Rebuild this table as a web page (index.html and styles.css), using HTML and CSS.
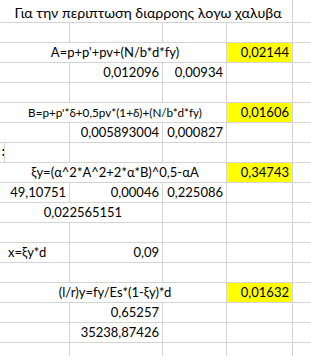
FILE: index.html
```html
<!DOCTYPE html>
<html lang="el">
<head>
<meta charset="utf-8">
<title>Sheet</title>
<link rel="stylesheet" href="styles.css">
</head>
<body>
<div class="sheet">
  <!-- row 1 -->
  <div class="c"></div><div class="c ctr span4 title">Για την περιπτωση διαρροης λογω χαλυβα</div><div class="c"></div>
  <!-- row 2 -->
  <div class="c"></div><div class="c"></div><div class="c"></div><div class="c"></div><div class="c"></div><div class="c"></div>
  <!-- row 3 -->
  <div class="c"></div><div class="c ctr span3">A=p+p'+pv+(N/b*d*fy)</div><div class="c num hl">0,02144</div><div class="c"></div>
  <!-- row 4 -->
  <div class="c"></div><div class="c"></div><div class="c num">0,012096</div><div class="c num">0,00934</div><div class="c"></div><div class="c"></div>
  <!-- row 5 -->
  <div class="c"></div><div class="c"></div><div class="c"></div><div class="c"></div><div class="c"></div><div class="c"></div>
  <!-- row 6 -->
  <div class="c"></div><div class="c ctr span3 small">B=p+p'*δ+0,5pv*(1+δ)+(N/b*d*fy)</div><div class="c num hl">0,01606</div><div class="c"></div>
  <!-- row 7 -->
  <div class="c"></div><div class="c"></div><div class="c num">0,005893004</div><div class="c num">0,000827</div><div class="c"></div><div class="c"></div>
  <!-- row 8 -->
  <div class="c clip"><span class="stub">:</span></div><div class="c"></div><div class="c"></div><div class="c"></div><div class="c"></div><div class="c"></div>
  <!-- row 9 -->
  <div class="c"></div><div class="c ctr span3">ξy=(α^2*A^2+2*α*B)^0,5-αA</div><div class="c num hl">0,34743</div><div class="c"></div>
  <!-- row 10 -->
  <div class="c"></div><div class="c num">49,10751</div><div class="c num">0,00046</div><div class="c num">0,225086</div><div class="c"></div><div class="c"></div>
  <!-- row 11 -->
  <div class="c"></div><div class="c ctr span2">0,022565151</div><div class="c"></div><div class="c"></div><div class="c"></div>
  <!-- row 12 -->
  <div class="c"></div><div class="c"></div><div class="c"></div><div class="c"></div><div class="c"></div><div class="c"></div>
  <!-- row 13 -->
  <div class="c"></div><div class="c left">x=ξy*d</div><div class="c num">0,09</div><div class="c"></div><div class="c"></div><div class="c"></div>
  <!-- row 14 -->
  <div class="c"></div><div class="c"></div><div class="c"></div><div class="c"></div><div class="c"></div><div class="c"></div>
  <!-- row 15 -->
  <div class="c"></div><div class="c ctr span3">(l/r)y=fy/Es*(1-ξy)*d</div><div class="c num hl">0,01632</div><div class="c"></div>
  <!-- row 16 -->
  <div class="c"></div><div class="c"></div><div class="c num">0,65257</div><div class="c"></div><div class="c"></div><div class="c"></div>
  <!-- row 17 -->
  <div class="c"></div><div class="c"></div><div class="c num">35238,87426</div><div class="c"></div><div class="c"></div><div class="c"></div>
  <!-- row 18 -->
  <div class="c"></div><div class="c"></div><div class="c"></div><div class="c"></div><div class="c"></div><div class="c"></div>
</div>
</body>
</html>
```
FILE: styles.css
```css
html, body {
  margin: 0;
  padding: 0;
  background: #ffffff;
  overflow: hidden;
}

.sheet {
  display: grid;
  grid-template-columns: 4px 64px 92px 63px 65px 30px;
  grid-template-rows: 22px repeat(17, 19px);
  gap: 1px;
  background: #d4d4d4;
  width: 321px;
  font-family: Lato, "Noto Sans", sans-serif;
  font-size: 13px;
  color: #000;
}

.c {
  background: #ffffff;
  display: flex;
  align-items: flex-end;
  padding: 0 3px 2px 2px;
  line-height: 16px;
  white-space: nowrap;
  overflow: visible;
  min-width: 0;
}

.num { justify-content: flex-end; }
.ctr { justify-content: center; }
.left { padding-left: 3px; }
.hl { background: #ffff00; }
.span4 { grid-column: span 4; }
.span3 { grid-column: span 3; }
.span2 { grid-column: span 2; }
.small { font-size: 11.7px; }
.title { font-size: 14.2px; padding-bottom: 1px; }

.clip {
  overflow: hidden;
  padding: 0;
  justify-content: flex-end;
}

.stub {
  font-weight: 700;
  font-size: 13px;
  margin-right: -1px;
  padding-bottom: 3px;
}
```
